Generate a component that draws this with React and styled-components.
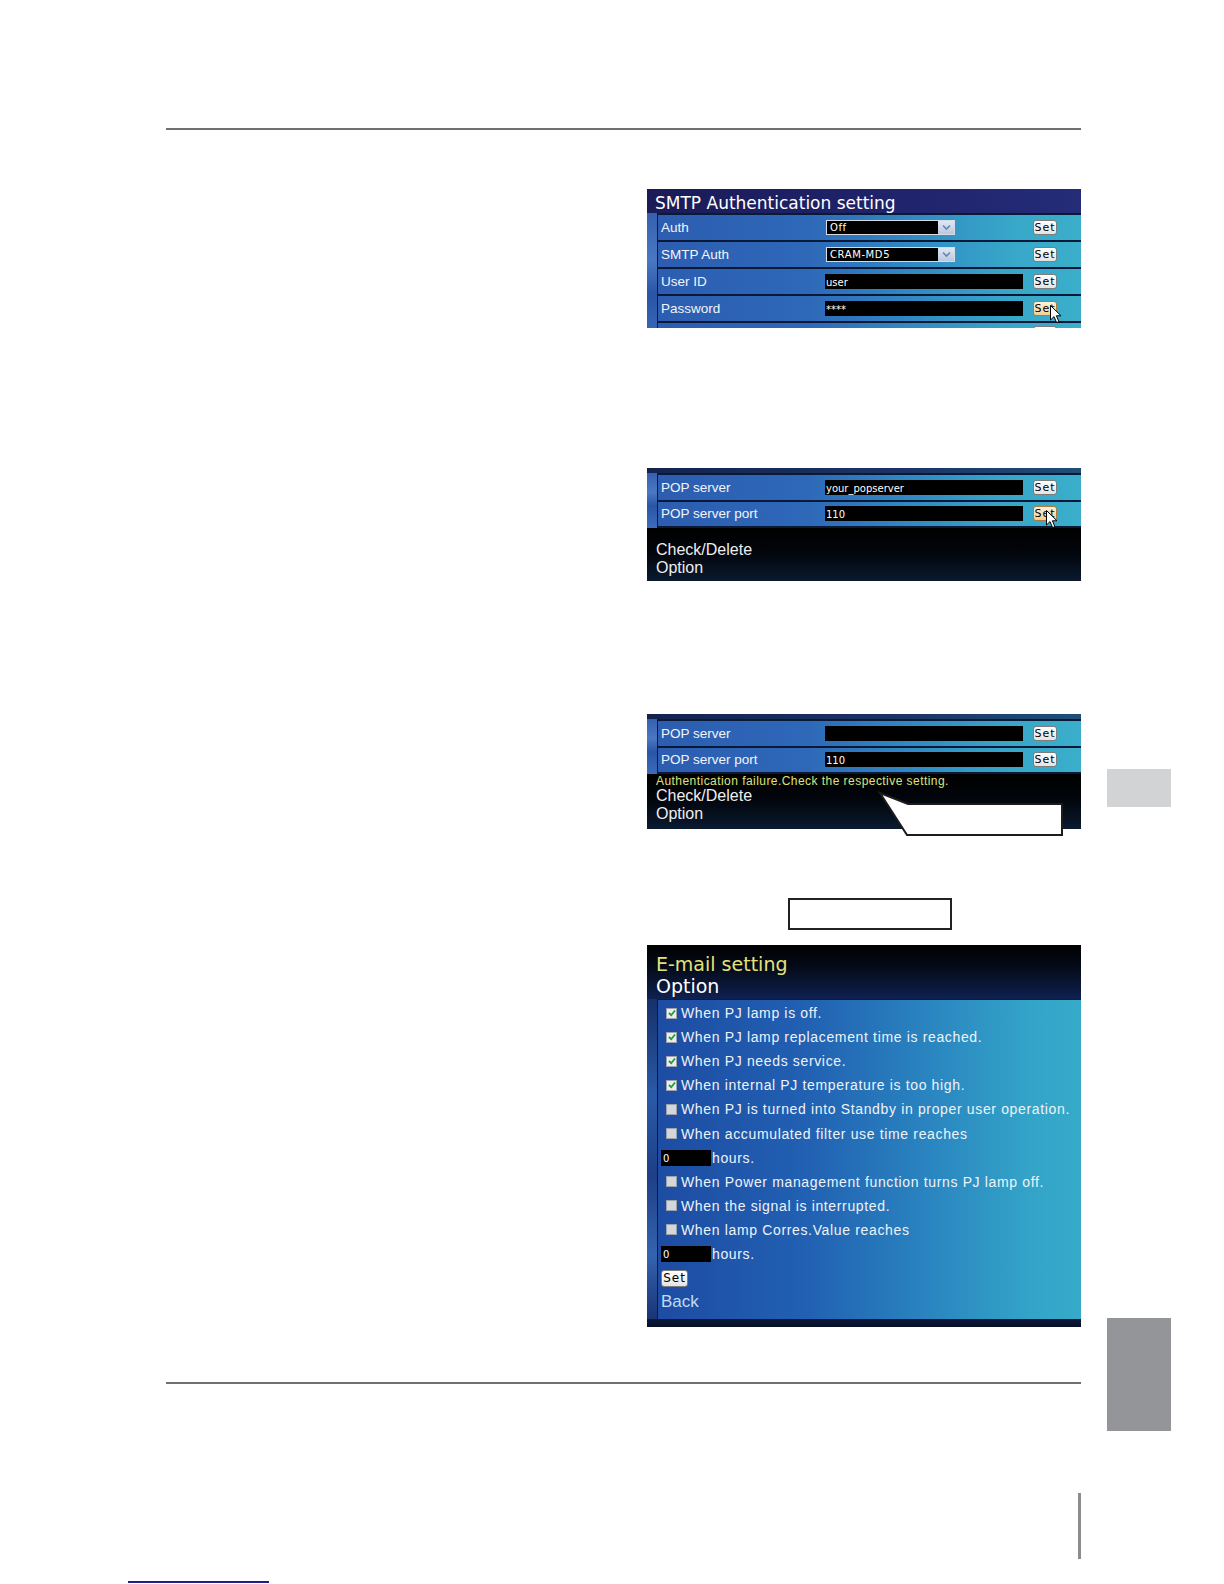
import React from "react";
import styled, { createGlobalStyle } from "styled-components";

const GlobalStyle = createGlobalStyle`
  html, body { margin: 0; padding: 0; background: #ffffff; }
  body { font-family: "Liberation Sans", Arial, sans-serif; }
  * { box-sizing: border-box; }
`;

const Page = styled.div`
  width: 1224px;
  height: 1584px;
  padding-top: 128px;
  background: #ffffff;
  overflow: hidden;
`;

const Columns = styled.div`
  display: flex;
  align-items: flex-start;
`;

const Content = styled.main`
  margin-left: 166px;
  width: 915px;
  display: flex;
  flex-direction: column;
`;

const Rule = styled.div`
  height: 2px;
  background: #707070;
  margin-top: ${(p) => p.$top || 0}px;
`;

const VBar = styled.div`
  align-self: flex-end;
  width: 3px;
  height: 66px;
  margin-top: 109px;
  background: #8c8c8c;
`;

const Shots = styled.div`
  margin-left: 481px;
  width: 434px;
  display: flex;
  flex-direction: column;
`;

const PanelFrame = styled.div`
  position: relative;
  margin-top: ${(p) => p.$top}px;
  height: ${(p) => p.$h}px;
`;

const Panel = styled.section`
  position: relative;
  height: 100%;
  overflow: hidden;
  display: flex;
  flex-direction: column;
  background: #101c44;
`;

const TitleBar = styled.div`
  height: 24px;
  flex: none;
  padding: 4px 0 0 8px;
  font-family: "DejaVu Sans", sans-serif;
  font-size: 17px;
  line-height: 21px;
  color: #ffffff;
  background: linear-gradient(90deg, #1a1b57 0%, #1f236a 55%, #252c78 100%);
  white-space: nowrap;
`;

const TopBand = styled.div`
  height: 5px;
  flex: none;
  background: linear-gradient(90deg, #14234e 0%, #1b3466 60%, #1f4f78 100%);
`;

const Body = styled.div`
  flex: ${(p) => (p.$grow ? 1 : "none")};
  display: flex;
  background: linear-gradient(180deg, #3560b0 0%, #4a78c2 35%, #2a55a6 60%, #3d6cbb 100%);
`;

const Rows = styled.div`
  flex: 1;
  margin-left: 10px;
  border-left: 1px solid #0c1a3c;
  display: flex;
  flex-direction: column;
  border-bottom: ${(p) => (p.$closed ? "2px solid #0b1938" : "none")};
`;

const Row = styled.div`
  height: ${(p) => p.$h || 27}px;
  flex: none;
  border-top: 2px solid #0b1938;
  display: flex;
  align-items: ${(p) => (p.$peek ? "flex-start" : "center")};
  padding-top: ${(p) => (p.$peek ? 3 : 0)}px;
  padding-left: 3px;
  background: linear-gradient(90deg, #2c5db0 0%, #2e68b8 35%, #3290c4 65%, #38a8c9 85%, #3aaecb 100%);
`;

const Label = styled.span`
  width: 164px;
  flex: none;
  font-size: 13.5px;
  color: #f2f5fa;
  white-space: nowrap;
`;

const ControlSlot = styled.div`
  width: 198px;
  flex: none;
  display: flex;
`;

const Select = styled.div`
  width: 129px;
  height: 15px;
  margin-left: 1px;
  display: flex;
  background: #000;
  border: 1px solid #d6dbe6;
`;

const SelectValue = styled.span`
  flex: 1;
  padding-left: 3px;
  font-family: "DejaVu Sans", sans-serif;
  font-size: 10px;
  line-height: 13px;
  letter-spacing: 0.6px;
  color: #fff;
`;

const SelectArrow = styled.span`
  width: 16px;
  display: flex;
  align-items: center;
  justify-content: center;
  background: linear-gradient(180deg, #dfe7f4, #b9c8e0);
`;

const TextField = styled.div`
  width: 198px;
  height: 15px;
  padding: 0 0 0 1px;
  background: #000;
  font-family: "DejaVu Sans", sans-serif;
  font-size: 10px;
  line-height: 17px;
  color: #fff;
  white-space: nowrap;
  overflow: hidden;
`;

const SetButton = styled.span`
  margin-left: ${(p) => (p.$inline ? 0 : 10)}px;
  width: ${(p) => (p.$inline ? 27 : 24)}px;
  height: ${(p) => (p.$inline ? 17 : 15)}px;
  flex: none;
  display: inline-flex;
  align-items: center;
  justify-content: center;
  border: 1px solid ${(p) => (p.$active ? "#b07a3c" : "#7d7d7d")};
  border-radius: 3px;
  background: ${(p) =>
    p.$active
      ? "linear-gradient(180deg, #fff1d8 0%, #f4cf96 100%)"
      : "linear-gradient(180deg, #ffffff 0%, #e4e4e4 100%)"};
  font-family: "DejaVu Sans", sans-serif;
  font-size: ${(p) => (p.$inline ? 12 : 11)}px;
  letter-spacing: 1px;
  color: #000;
`;

const CursorSvg = styled.svg`
  position: absolute;
  left: ${(p) => p.$x}px;
  top: ${(p) => p.$y}px;
  width: 12px;
  height: 19px;
  overflow: visible;
`;

const DarkArea = styled.div`
  flex: 1;
  padding: ${(p) => p.$pad}px 0 0 9px;
  background: linear-gradient(180deg, #000000 0%, #02050b 45%, #0a1a30 100%);
`;

const ErrorText = styled.div`
  font-size: 12px;
  line-height: 12px;
  letter-spacing: 0.45px;
  color: #dfe27c;
  white-space: nowrap;
`;

const MenuLink = styled.div`
  font-size: 16px;
  line-height: 17.5px;
  color: #eeeeee;
`;

const CalloutSvg = styled.svg`
  position: absolute;
  left: 230px;
  top: 76px;
  width: 190px;
  height: 50px;
  overflow: visible;
`;

const LabelBox = styled.div`
  margin-top: 69px;
  margin-left: 141px;
  width: 164px;
  height: 32px;
  border: 2px solid #222;
  background: #fff;
`;

const OptionHead = styled.div`
  height: 54px;
  flex: none;
  padding: 8px 0 0 9px;
  font-family: "DejaVu Sans", sans-serif;
  font-size: 19px;
  background: linear-gradient(180deg, #000000 0%, #040a18 40%, #0f2150 100%);
`;

const HeadLine = styled.div`
  line-height: ${(p) => (p.$accent ? 23 : 20)}px;
  color: ${(p) => (p.$accent ? "#e4e27a" : "#ffffff")};
`;

const OptionBody = styled.div`
  flex: 1;
  display: flex;
  background: linear-gradient(180deg, #16306a 0%, #2a5aa8 30%, #1e3f86 55%, #3464b0 80%, #1a3474 100%);
`;

const OptionList = styled.div`
  flex: 1;
  margin-left: 10px;
  padding-top: 1px;
  border-left: 1px solid #0c1a3c;
  border-top: 1px solid #0c1a3c;
  display: flex;
  flex-direction: column;
  background: linear-gradient(90deg, #1d4ca3 0%, #2160b2 35%, #2a86c0 65%, #33a4c8 88%, #36aac9 100%);
`;

const OptionRow = styled.div`
  height: 24.1px;
  flex: none;
  display: flex;
  align-items: center;
  padding-left: ${(p) => (p.$indent ? 8 : 3)}px;
  font-size: 14px;
  letter-spacing: 0.65px;
  color: #eef3f8;
  white-space: nowrap;
`;

const Box = styled.span`
  width: 11px;
  height: 11px;
  margin-right: 4px;
  flex: none;
  display: inline-flex;
  align-items: center;
  justify-content: center;
  border: 1px solid #9aa2ad;
  background: ${(p) => (p.$checked ? "#ececec" : "#d3d6da")};
`;

const HoursField = styled.span`
  width: 50px;
  height: 16px;
  margin-right: 1px;
  padding-left: 2px;
  background: #000;
  font-family: "DejaVu Sans", sans-serif;
  font-size: 10px;
  line-height: 17px;
  letter-spacing: 0;
  color: #fff;
`;

const BackLink = styled.span`
  font-size: 17px;
  letter-spacing: 0;
  color: #c4dcf2;
`;

const BottomStrip = styled.div`
  height: 8px;
  flex: none;
  background: linear-gradient(180deg, #0c1a3c, #070f26);
`;

const TabRail = styled.aside`
  margin-left: 26px;
  width: 64px;
  display: flex;
  flex-direction: column;
`;

const Tab = styled.div`
  margin-top: ${(p) => p.$top}px;
  height: ${(p) => p.$h}px;
  background: ${(p) => p.$color};
`;

const FooterLink = styled.div`
  margin-top: 22px;
  margin-left: 128px;
  width: 141px;
  height: 2px;
  background: #20208a;
`;

const Cursor = ({ x, y }) => (
  <CursorSvg $x={x} $y={y} viewBox="0 0 12 19">
    <path
      d="M0.5 0.5 L0.5 15 L4 11.6 L6.6 17.6 L8.9 16.6 L6.4 10.8 L11 10.8 Z"
      fill="#ffffff"
      stroke="#000000"
      strokeWidth="1"
      strokeLinejoin="round"
    />
  </CursorSvg>
);

const Arrow = () => (
  <svg width="9" height="7" viewBox="0 0 9 7">
    <path d="M1 1.5 L4.5 5 L8 1.5" fill="none" stroke="#6b84ad" strokeWidth="1.6" />
  </svg>
);

const Check = () => (
  <svg width="8" height="8" viewBox="0 0 8 8">
    <path d="M1 4 L3.2 6.2 L7 1.5" fill="none" stroke="#1f9a3c" strokeWidth="1.8" />
  </svg>
);

const SettingRow = ({ label, select, value, active, h, peek }) => (
  <Row $h={h} $peek={peek}>
    <Label>{label}</Label>
    <ControlSlot>
      {select ? (
        <Select>
          <SelectValue>{value}</SelectValue>
          <SelectArrow>
            <Arrow />
          </SelectArrow>
        </Select>
      ) : value !== undefined ? (
        <TextField>{value}</TextField>
      ) : null}
    </ControlSlot>
    <SetButton $active={active}>{peek ? "" : "Set"}</SetButton>
  </Row>
);

const options = [
  { text: "When PJ lamp is off.", checked: true },
  { text: "When PJ lamp replacement time is reached.", checked: true },
  { text: "When PJ needs service.", checked: true },
  { text: "When internal PJ temperature is too high.", checked: true },
  { text: "When PJ is turned into Standby in proper user operation.", checked: false },
  { text: "When accumulated filter use time reaches", checked: false, hours: true },
  { text: "When Power management function turns PJ lamp off.", checked: false },
  { text: "When the signal is interrupted.", checked: false },
  { text: "When lamp Corres.Value reaches", checked: false, hours: true },
];

export default function App() {
  return (
    <Page>
      <GlobalStyle />
      <Columns>
        <Content>
          <Rule />
          <Shots>
            <PanelFrame $top={59} $h={139}>
              <Panel>
                <TitleBar>SMTP Authentication setting</TitleBar>
                <Body $grow>
                  <Rows>
                    <SettingRow label="Auth" select value="Off" />
                    <SettingRow label="SMTP Auth" select value="CRAM-MD5" />
                    <SettingRow label="User ID" value="user" />
                    <SettingRow label="Password" value="****" active />
                    <SettingRow label="" peek />
                  </Rows>
                </Body>
                <Cursor x={403} y={116} />
              </Panel>
            </PanelFrame>

            <PanelFrame $top={140} $h={113}>
              <Panel>
                <TopBand />
                <Body>
                  <Rows $closed>
                    <SettingRow label="POP server" value="your_popserver" h={26.5} />
                    <SettingRow label="POP server port" value="110" active h={26.5} />
                  </Rows>
                </Body>
                <DarkArea $pad={13}>
                  <MenuLink>Check/Delete</MenuLink>
                  <MenuLink>Option</MenuLink>
                </DarkArea>
                <Cursor x={399} y={42} />
              </Panel>
            </PanelFrame>

            <PanelFrame $top={133} $h={115}>
              <Panel>
                <TopBand />
                <Body>
                  <Rows $closed>
                    <SettingRow label="POP server" value="" h={26.5} />
                    <SettingRow label="POP server port" value="110" h={26.5} />
                  </Rows>
                </Body>
                <DarkArea $pad={1}>
                  <ErrorText>Authentication failure.Check the respective setting.</ErrorText>
                  <MenuLink>Check/Delete</MenuLink>
                  <MenuLink>Option</MenuLink>
                </DarkArea>
              </Panel>
              <CalloutSvg viewBox="0 0 190 50">
                <path
                  d="M3 3 L31 14 L185 14 L185 45 L30 45 Z"
                  fill="#ffffff"
                  stroke="#1c1c1c"
                  strokeWidth="2"
                  strokeLinejoin="miter"
                />
              </CalloutSvg>
            </PanelFrame>

            <LabelBox />

            <PanelFrame $top={15} $h={382}>
              <Panel>
                <OptionHead>
                  <HeadLine $accent>E-mail setting</HeadLine>
                  <HeadLine>Option</HeadLine>
                </OptionHead>
                <OptionBody>
                  <OptionList>
                    {options.map((o) => (
                      <React.Fragment key={o.text}>
                        <OptionRow $indent>
                          <Box $checked={o.checked}>{o.checked && <Check />}</Box>
                          {o.text}
                        </OptionRow>
                        {o.hours && (
                          <OptionRow>
                            <HoursField>0</HoursField>
                            hours.
                          </OptionRow>
                        )}
                      </React.Fragment>
                    ))}
                    <OptionRow>
                      <SetButton $inline>Set</SetButton>
                    </OptionRow>
                    <OptionRow>
                      <BackLink>Back</BackLink>
                    </OptionRow>
                  </OptionList>
                </OptionBody>
                <BottomStrip />
              </Panel>
            </PanelFrame>
          </Shots>
          <Rule $top={55} />
          <VBar />
        </Content>
        <TabRail>
          <Tab $top={641} $h={38} $color="#d1d3d4" />
          <Tab $top={511} $h={113} $color="#939598" />
        </TabRail>
      </Columns>
      <FooterLink />
    </Page>
  );
}
